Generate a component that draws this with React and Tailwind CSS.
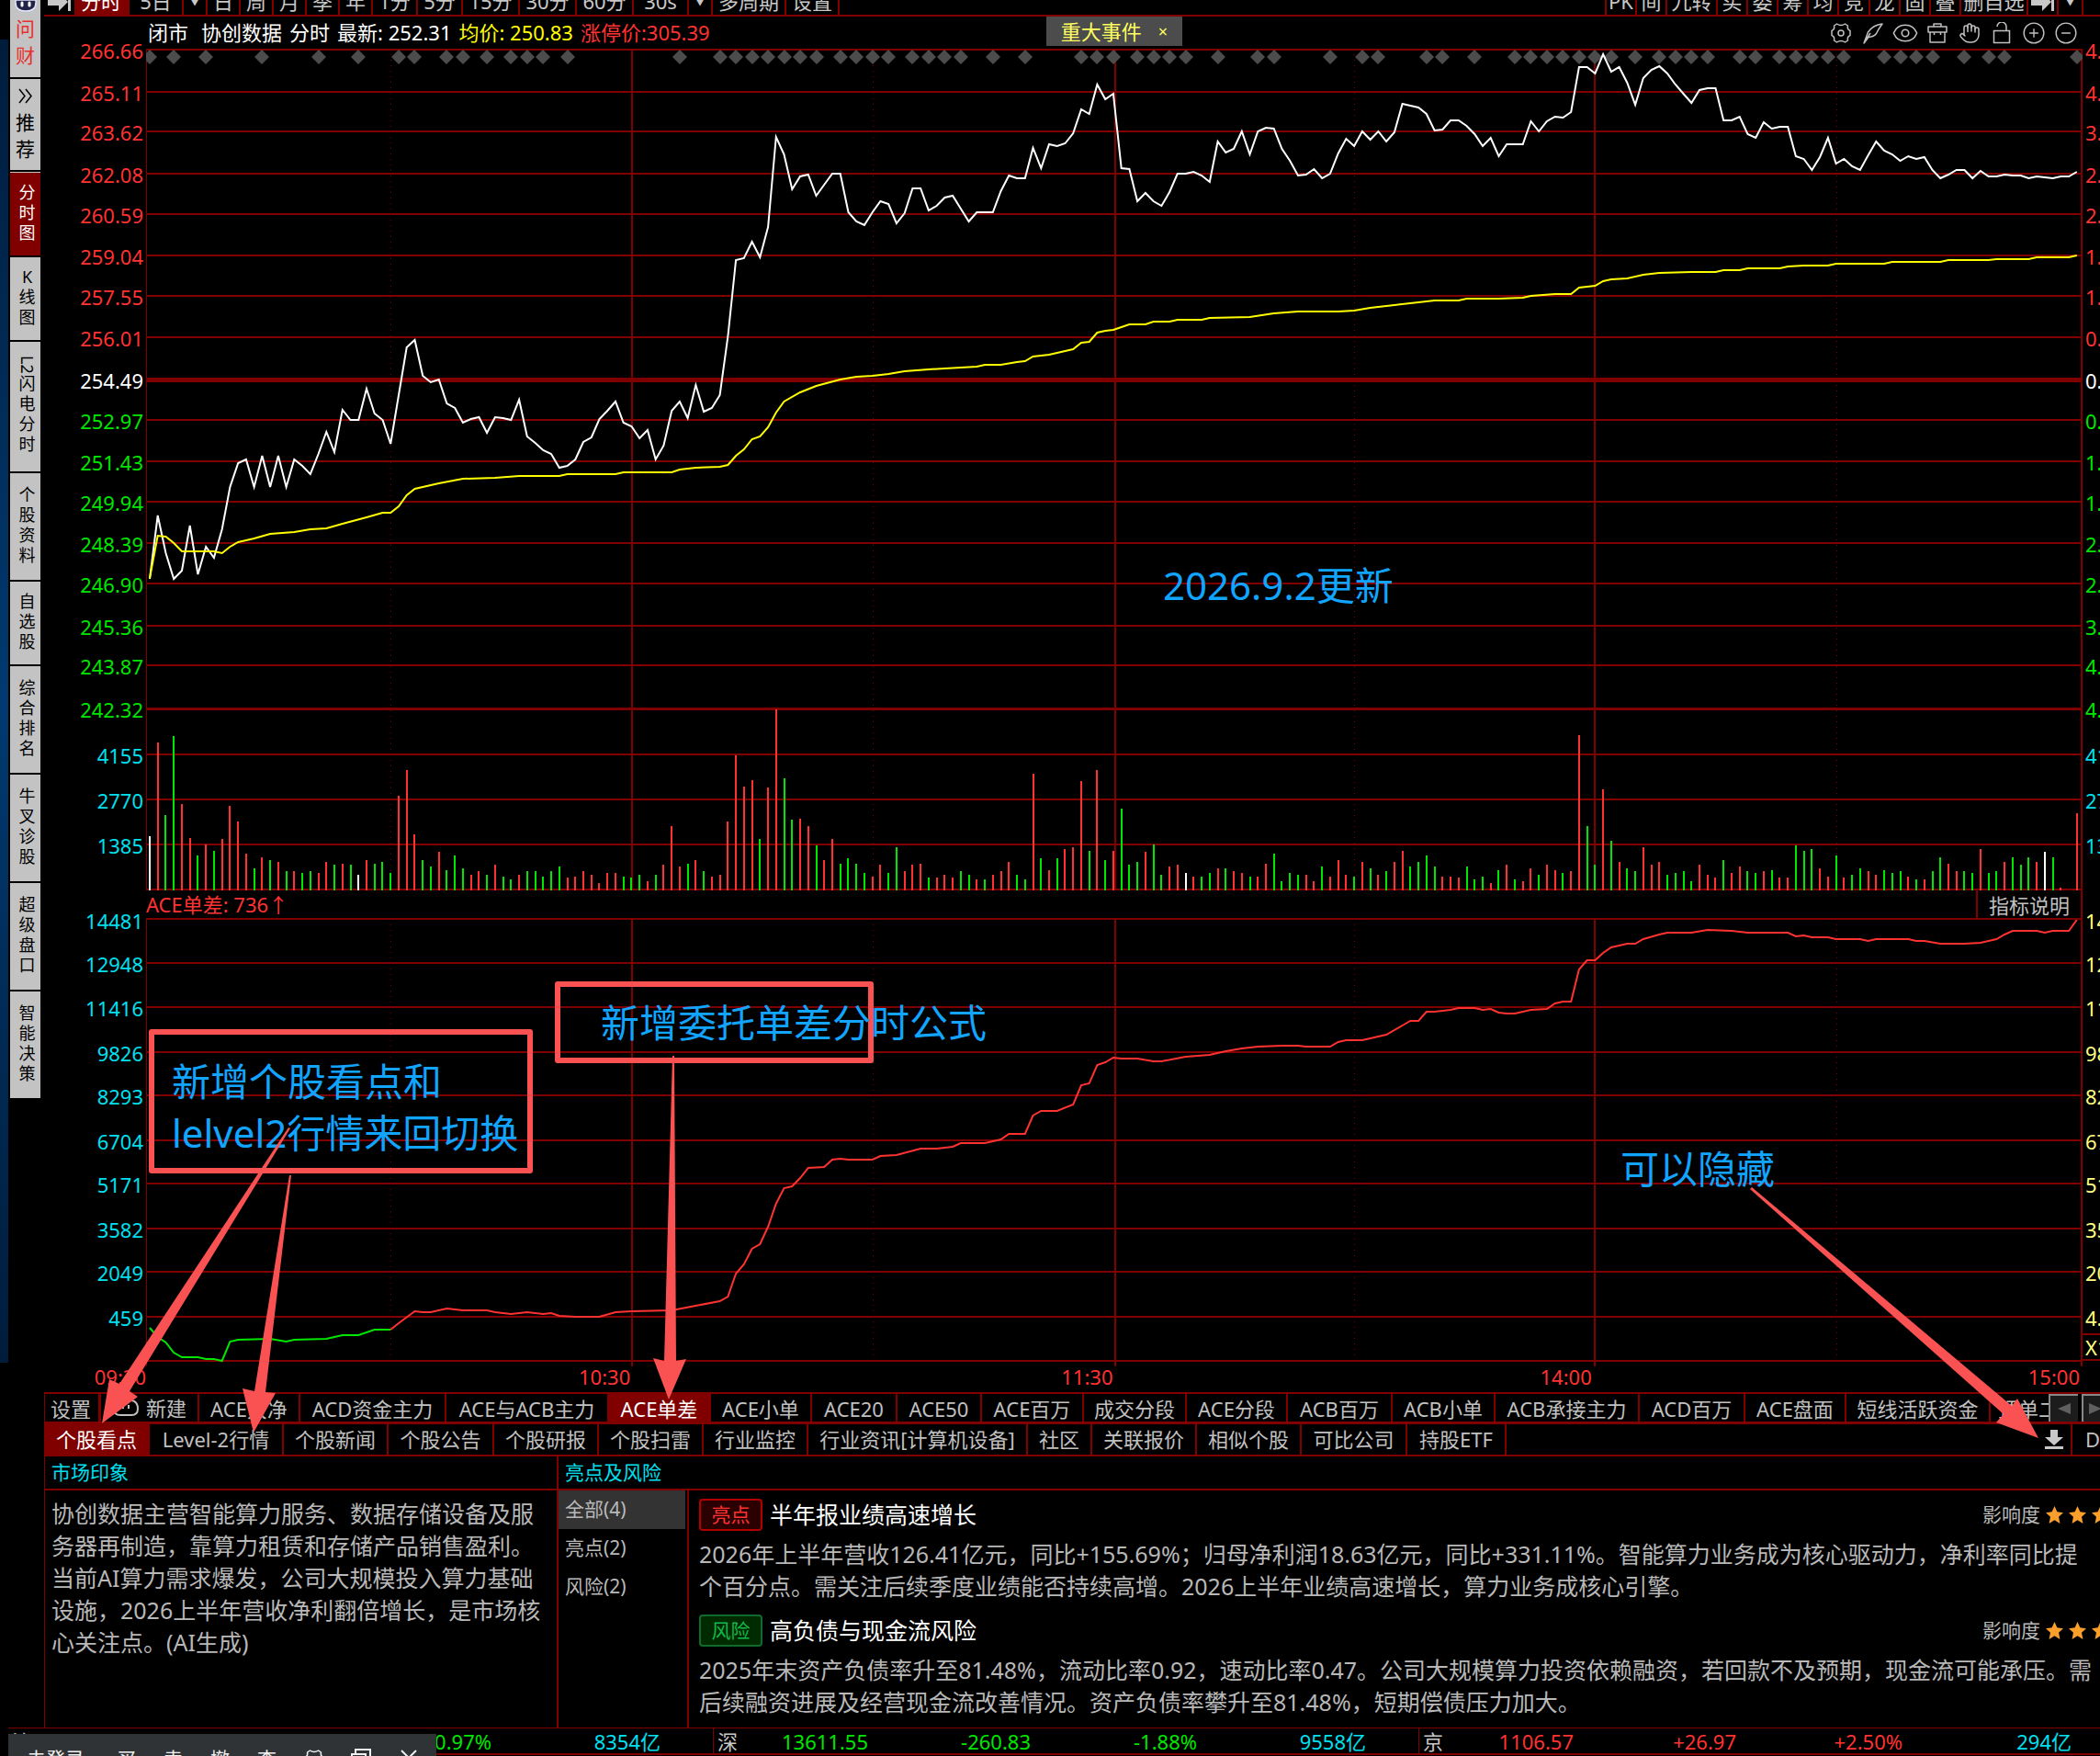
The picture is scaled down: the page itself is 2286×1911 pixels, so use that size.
import { Eye, Hand, CirclePlus, CircleMinus } from 'lucide-react'
import clsx from 'clsx'

const sideItems = [
  { label: '分时图', h: 'h-[91px]', active: true },
  { label: 'K线图', h: 'h-[90px]' },
  { label: '闪电分时', prefix: 'L2', h: 'h-[141px]' },
  { label: '个股资料', h: 'h-[116px]' },
  { label: '自选股', h: 'h-[90px]' },
  { label: '综合排名', h: 'h-[116px]' },
  { label: '牛叉诊股', h: 'h-[116px]' },
  { label: '超级盘口', h: 'h-[116px]' },
  { label: '智能决策', h: 'h-[116px]' },
]

const periods = [
  { label: '分时', w: 'w-[60px]', active: true },
  { label: '5日', w: 'w-[59px]' },
  { label: '▼', w: 'w-[26px]', arrow: true },
  { label: '日', w: 'w-9' },
  { label: '周', w: 'w-9' },
  { label: '月', w: 'w-9' },
  { label: '季', w: 'w-9' },
  { label: '年', w: 'w-9' },
  { label: '1分', w: 'w-[49px]' },
  { label: '5分', w: 'w-[49px]' },
  { label: '15分', w: 'w-[62px]' },
  { label: '30分', w: 'w-[62px]' },
  { label: '60分', w: 'w-[62px]' },
  { label: '30s', w: 'w-[60px]' },
  { label: '▼', w: 'w-[26px]', arrow: true },
  { label: '多周期', w: 'w-[80px]' },
  { label: '设置', w: 'w-[58px]' },
]

const tools = [
  { label: 'PK', w: 'w-[33px]' },
  { label: '间', w: 'w-[33px]' },
  { label: '九转', w: 'w-[55px]' },
  { label: '买', w: 'w-[33px]' },
  { label: '委', w: 'w-[33px]' },
  { label: '筹', w: 'w-[33px]' },
  { label: '均', w: 'w-[33px]' },
  { label: '竞', w: 'w-[34px]' },
  { label: '龙', w: 'w-[33px]' },
  { label: '固', w: 'w-[33px]' },
  { label: '叠', w: 'w-[33px]' },
  { label: '删自选', w: 'w-[73px]' },
]

const formulaTabs = [
  { label: 'ACE大净', w: 'w-[110px]' },
  { label: 'ACD资金主力', w: 'w-[159px]' },
  { label: 'ACE与ACB主力', w: 'w-[177px]' },
  { label: 'ACE单差', w: 'w-[111px]', active: true },
  { label: 'ACE小单', w: 'w-[110px]' },
  { label: 'ACE20', w: 'w-[93px]' },
  { label: 'ACE50', w: 'w-[92px]' },
  { label: 'ACE百万', w: 'w-[111px]' },
  { label: '成交分段', w: 'w-[112px]' },
  { label: 'ACE分段', w: 'w-[110px]' },
  { label: 'ACB百万', w: 'w-[114px]' },
  { label: 'ACB小单', w: 'w-[112px]' },
  { label: 'ACB承接主力', w: 'w-[157px]' },
  { label: 'ACD百万', w: 'w-[115px]' },
  { label: 'ACE盘面', w: 'w-[110px]' },
  { label: '短线活跃资金', w: 'w-[157px]' },
  { label: '顶单二', w: 'w-[84px]' },
]

const infoTabs = [
  { label: '个股看点', w: 'w-[114px]', active: true },
  { label: 'Level-2行情', w: 'w-[146px]' },
  { label: '个股新闻', w: 'w-[114px]' },
  { label: '个股公告', w: 'w-[115px]' },
  { label: '个股研报', w: 'w-[114px]' },
  { label: '个股扫雷', w: 'w-[114px]' },
  { label: '行业监控', w: 'w-[114px]' },
  { label: '行业资讯[计算机设备]', w: 'w-[239px]' },
  { label: '社区', w: 'w-[70px]' },
  { label: '关联报价', w: 'w-[114px]' },
  { label: '相似个股', w: 'w-[114px]' },
  { label: '可比公司', w: 'w-[115px]' },
  { label: '持股ETF', w: 'w-[108px]' },
]

const RED = 'text-[#ff3232]'
const GREEN = 'text-[#00e600]'
const CYAN = 'text-[#00e0f0]'
const YELLOW = 'text-[#ffff80]'

// y of the grid line, left label, right label, colours
const axis = [
  [54, '266.66', '4.78%', RED],
  [100, '265.11', '4.17%', RED],
  [143, '263.62', '3.59%', RED],
  [189, '262.08', '2.98%', RED],
  [233, '260.59', '2.40%', RED],
  [278, '259.04', '1.79%', RED],
  [322, '257.55', '1.20%', RED],
  [367, '256.01', '0.60%', RED],
  [413, '254.49', '0.00%', 'text-white'],
  [457, '252.97', '0.60%', GREEN],
  [502, '251.43', '1.20%', GREEN],
  [546, '249.94', '1.79%', GREEN],
  [591, '248.39', '2.40%', GREEN],
  [635, '246.90', '2.98%', GREEN],
  [681, '245.36', '3.59%', GREEN],
  [724, '243.87', '4.17%', GREEN],
  [771, '242.32', '4.78%', GREEN],
  [821, '4155', '4155', CYAN],
  [870, '2770', '2770', CYAN],
  [919, '1385', '1385', CYAN],
  [1001, '14481', '14481', CYAN, YELLOW],
  [1048, '12948', '12948', CYAN, YELLOW],
  [1096, '11416', '11416', CYAN, YELLOW],
  [1145, '9826', '9826', CYAN, YELLOW],
  [1192, '8293', '8293', CYAN, YELLOW],
  [1241, '6704', '6704', CYAN, YELLOW],
  [1288, '5171', '5171', CYAN, YELLOW],
  [1337, '3582', '3582', CYAN, YELLOW],
  [1384, '2049', '2049', CYAN, YELLOW],
  [1433, '459', '4.59', CYAN, YELLOW],
]

// one value per minute
const price = [
  630, 561, 602, 630, 621, 572, 625, 595, 607, 576, 530, 504, 500, 530, 496, 530, 496, 530, 500, 507,
  516, 494, 470, 492, 446, 457, 457, 423, 450, 457, 483, 430, 378, 370, 409, 416, 413, 439, 444, 460,
  456, 454, 471, 454, 455, 457, 435, 475, 482, 490, 494, 509, 507, 500, 481, 476, 456, 447, 437, 460,
  464, 477, 468, 500, 485, 447, 437, 455, 419, 448, 444, 430, 366, 283, 281, 263, 280, 247, 149, 168,
  206, 192, 190, 213, 201, 189, 189, 231, 241, 245, 231, 219, 222, 243, 232, 205, 205, 229, 224, 215,
  213, 227, 241, 231, 231, 231, 208, 191, 194, 194, 161, 183, 157, 159, 156, 145, 119, 124, 92, 108,
  102, 183, 184, 219, 210, 219, 224, 209, 189, 189, 187, 191, 198, 154, 166, 162, 143, 168, 143, 139,
  140, 162, 175, 191, 190, 184, 194, 189, 167, 151, 159, 143, 152, 143, 154, 144, 113, 115, 117, 124,
  142, 141, 131, 131, 137, 146, 159, 150, 170, 157, 157, 157, 132, 143, 132, 127, 128, 122, 73, 73,
  80, 59, 78, 73, 90, 114, 85, 76, 72, 80, 92, 102, 112, 98, 96, 96, 131, 131, 127, 146,
  150, 133, 140, 138, 138, 170, 173, 185, 171, 150, 178, 173, 181, 185, 169, 154, 164, 168, 175, 170,
  173, 171, 185, 194, 190, 185, 185, 194, 186, 192, 192, 190, 191, 191, 194, 192, 193, 194, 192, 192,
  187,
]

// [minute, y]
const average = [
  [0, 629], [1, 583], [2, 584], [3, 591], [4, 600], [8, 600], [9, 602], [10, 595], [11, 590], [13, 586],
  [15, 581], [18, 579], [20, 576], [22, 575], [24, 570], [27, 563], [29, 558], [30, 558], [31, 551], [32, 539],
  [33, 532], [36, 526], [39, 521], [43, 520], [46, 518], [51, 518], [52, 516], [58, 516], [59, 514], [65, 514],
  [66, 511], [68, 509], [71, 508], [72, 506], [73, 496], [74, 489], [75, 478], [76, 475], [77, 465], [78, 449],
  [79, 437], [81, 427], [83, 420], [86, 413], [88, 410], [90, 409], [92, 407], [94, 404], [97, 402], [101, 400],
  [103, 399], [104, 397], [106, 397], [108, 394], [109, 393], [110, 388], [112, 386], [115, 380], [116, 373], [117, 372],
  [118, 362], [119, 360], [120, 359], [121, 356], [122, 353], [124, 353], [125, 350], [127, 350], [128, 348], [131, 348],
  [132, 346], [137, 345], [140, 341], [143, 339], [148, 339], [150, 338], [152, 335], [155, 332], [158, 329], [160, 327],
  [163, 327], [164, 325], [168, 325], [171, 324], [172, 322], [175, 320], [177, 320], [178, 313], [180, 311], [181, 306],
  [182, 304], [184, 303], [186, 299], [188, 297], [192, 296], [195, 296], [196, 294], [198, 294], [199, 292], [203, 292],
  [204, 290], [206, 289], [209, 289], [210, 287], [216, 287], [217, 285], [223, 285], [224, 283], [229, 283], [230, 282],
  [234, 282], [235, 280], [239, 280], [240, 278],
]

const aceGreen = [
  [0, 1445], [1, 1455], [2, 1461], [3, 1472], [4, 1477], [6, 1477], [7, 1479], [8, 1479], [9, 1481], [10, 1460],
  [11, 1458], [15, 1457], [17, 1460], [18, 1458], [22, 1457], [24, 1453], [26, 1453], [28, 1447], [30, 1447],
]

const aceRed = [
  [30, 1447], [31, 1440], [33, 1427], [34, 1428], [35, 1428], [37, 1424], [39, 1426], [42, 1426], [43, 1428], [45, 1430],
  [47, 1428], [49, 1430], [50, 1429], [51, 1432], [53, 1433], [56, 1433], [58, 1428], [60, 1427], [65, 1426], [68, 1421],
  [71, 1416], [72, 1411], [73, 1386], [74, 1376], [75, 1359], [76, 1354], [77, 1335], [78, 1310], [79, 1293], [80, 1291],
  [81, 1282], [82, 1271], [84, 1270], [85, 1262], [86, 1261], [87, 1262], [90, 1262], [91, 1258], [93, 1257], [96, 1250],
  [98, 1250], [100, 1248], [101, 1244], [104, 1244], [106, 1240], [107, 1234], [109, 1234], [110, 1214], [111, 1209], [113, 1209],
  [115, 1202], [116, 1181], [117, 1179], [118, 1159], [119, 1156], [120, 1151], [121, 1152], [123, 1152], [125, 1155], [126, 1155],
  [129, 1150], [132, 1148], [134, 1144], [136, 1141], [138, 1139], [141, 1138], [143, 1138], [144, 1139], [147, 1139], [148, 1134],
  [149, 1132], [151, 1132], [153, 1128], [154, 1126], [156, 1116], [157, 1111], [158, 1111], [159, 1101], [160, 1101], [162, 1099],
  [163, 1097], [165, 1097], [166, 1099], [167, 1098], [168, 1102], [169, 1103], [170, 1103], [172, 1099], [174, 1098], [175, 1092],
  [176, 1090], [177, 1090], [178, 1055], [179, 1045], [180, 1045], [181, 1037], [182, 1031], [184, 1027], [185, 1027], [186, 1022],
  [188, 1017], [189, 1015], [192, 1015], [194, 1012], [197, 1013], [199, 1015], [204, 1015], [205, 1019], [206, 1018], [207, 1020],
  [209, 1020], [210, 1022], [213, 1022], [214, 1024], [215, 1022], [219, 1022], [220, 1024], [221, 1024], [223, 1027], [226, 1027],
  [228, 1026], [230, 1022], [231, 1017], [232, 1013], [235, 1013], [236, 1015], [237, 1013], [239, 1013], [240, 1001],
]

// bar colour and height, one per minute
const volumes = `w59 r161 g82 g168 r94 r57 g38 r50 g43 r56 r92 r75 r40 g24 r36 g33 r31 g21 r21 g19
g21 r19 r31 g28 r29 g28 w17 r33 g29 g31 g19 r103 r131 r61 g33 g26 r42 g22 g38 g24
r17 r21 g17 r28 g15 g12 r17 g21 g21 g15 g21 g26 r14 r15 r21 r17 r8 r19 r19 g15
g14 g17 r10 g17 r28 r70 r26 g29 r33 g21 r15 r17 r75 r147 r113 r120 g56 r112 r197 g122
g77 r78 r70 g49 r33 r56 g29 g35 g29 g19 r15 r28 g19 g47 r21 r28 r29 g14 r14 r17
r14 g21 g17 r12 g12 r17 r21 r31 g17 g12 r127 g35 r22 g35 r45 r47 r119 g43 r131 g33
r43 g89 g28 g31 r42 g50 g17 r26 r28 w19 r15 g15 g19 r24 g24 r21 r19 g15 r15 r29
g40 g10 g19 g17 r17 r10 g26 r15 r33 r17 g15 r31 g24 r17 g21 r31 r43 g26 g31 g38
g26 r15 r15 r14 g26 g12 g15 r8 g22 r28 g12 r10 r24 g17 r28 r22 g19 r21 r169 g70
g28 r110 g54 r31 g24 g21 r47 r28 r31 g17 g19 g21 g10 r28 r17 r14 g33 r19 r26 g21
g19 r21 g22 r14 r14 g49 g43 g45 r24 r15 g38 r14 g17 g24 r21 r17 g22 g19 g21 r15
g12 r12 g21 g36 r29 r21 g21 g19 r45 g19 g21 r31 g36 g28 g36 r31 w42 g36 r3 r0
r84`.split(/\s+/)

const barColor = { r: '#ff3232', g: '#00e600', w: '#ffffff' }

const eventMinutes = [
  0, 3, 7, 14, 21, 26, 31, 33, 37, 39, 42, 45, 47, 49, 52, 66, 71, 73, 75, 77, 79, 81, 83, 86, 88, 90, 92, 95, 97, 99,
  101, 105, 109, 116, 118, 120, 123, 125, 127, 129, 133, 138, 140, 147, 151, 153, 159, 161, 165, 170, 172, 174, 176,
  178, 180, 182, 185, 188, 190, 192, 194, 198, 200, 203, 205, 207, 209, 211, 216, 218, 220, 222, 226, 229, 231, 240,
]

const minuteX = (i) => 163 + i * 8.741
const toPoints = (pairs) => pairs.map(([i, y]) => `${minuteX(i).toFixed(1)},${y}`).join(' ')

const hours = [687.5, 1214, 1735.5]
const halfHours = [425.5, 950.5, 1474.5, 1999.5]

function Grid({ rows, top, bottom, tick = 0 }) {
  return (
    <g stroke="#800000" fill="none" shapeRendering="crispEdges">
      {halfHours.map((x) => (
        <line key={x} x1={x} x2={x} y1={top + 5} y2={bottom} strokeDasharray="1 5" />
      ))}
      {rows.map((y) => (
        <line key={y} x1="159" x2="2267" y1={y} y2={y} strokeWidth={y === 413 ? 5 : y === 771 ? 3 : 2} />
      ))}
      {hours.map((x) => (
        <line key={x} x1={x} x2={x} y1={top} y2={bottom + tick} strokeWidth="2" />
      ))}
      <line x1="159.5" x2="159.5" y1={top} y2={bottom + tick} />
      <line x1="2266" x2="2266" y1={top} y2={bottom + tick} strokeWidth="2" />
    </g>
  )
}

function PriceChart() {
  return (
    <svg className="block h-[916px] w-full" viewBox="159 53 2108 916" preserveAspectRatio="none">
      <Grid rows={[...axis.slice(0, 20).map((r) => r[0]), 968]} top={54} bottom={969} />
      {eventMinutes.map((m) => {
        const x = Math.round(minuteX(m))
        return <path key={m} d={`M${x} 54l8 8-8 8-8-8z`} fill="#4c4c4c" />
      })}
      {volumes.map((v, i) => {
        const h = Number(v.slice(1))
        return (
          <rect
            key={i}
            x={Math.round(minuteX(i)) - 1}
            y={969 - h}
            width="2"
            height={h}
            fill={barColor[v[0]]}
            shapeRendering="crispEdges"
          />
        )
      })}
      <polyline points={toPoints(price.map((y, i) => [i, y]))} fill="none" stroke="#fff" strokeWidth="2" />
      <polyline points={toPoints(average)} fill="none" stroke="#ffff00" strokeWidth="2" />
    </svg>
  )
}

function AceChart() {
  return (
    <svg className="block h-[487px] w-full" viewBox="159 1001 2108 487" preserveAspectRatio="none">
      <Grid rows={[...axis.slice(21).map((r) => r[0]), 1481]} top={1001} bottom={1481} tick={6} />
      <polyline points={toPoints(aceGreen)} fill="none" stroke="#00e600" strokeWidth="2" />
      <polyline points={toPoints(aceRed)} fill="none" stroke="#ff3232" strokeWidth="2" />
    </svg>
  )
}

function AxisLabels({ side }) {
  return (
    <ul>
      {axis.map(([y, left, right, color, rightColor], i) => {
        // labels hang 15px below their grid line
        const prev = i ? axis[i - 1][0] : 18 - 15
        return (
          <li
            key={y}
            className={clsx('flex items-end leading-7', side === 'left' ? `justify-end ${color}` : rightColor || color)}
            style={{ height: y - prev }}
          >
            {side === 'left' ? left : right}
          </li>
        )
      })}
    </ul>
  )
}

function GearIcon() {
  return (
    <svg className="size-6" viewBox="0 0 24 24" fill="none" stroke="currentColor" strokeWidth="1.5" strokeLinejoin="round">
      <path d="M7.500 2Q12 5 16.500 2L19.500 4Q18.500 8 22 9.500V14.500Q18.500 16 19.500 20L16.500 22Q12 19 7.500 22L4.500 20Q5.500 16 2 14.500V9.500Q5.500 8 4.500 4z" />
      <circle cx="12" cy="12" r="3" />
    </svg>
  )
}

function QuillIcon() {
  return (
    <svg className="size-6" viewBox="0 0 24 24" fill="none" stroke="currentColor" strokeWidth="1.5" strokeLinejoin="round">
      <path d="M2 23 6.500 11Q12 3 22 2 17.500 8 15.500 12.500 13 16 7 16.500zM2 23 9 12" />
    </svg>
  )
}

function CaseIcon() {
  return (
    <svg className="size-6" viewBox="0 0 24 24" fill="none" stroke="currentColor" strokeWidth="1.5" strokeLinejoin="round">
      <path d="M8 5V2h8v3M2 5h20v6H2zM4 11v11h16V11M8.500 11v3M15.500 11v3" />
    </svg>
  )
}

function LockIcon() {
  return (
    <svg className="size-6" viewBox="0 0 24 24" fill="none" stroke="currentColor" strokeWidth="1.5">
      <path d="M3.500 9.500h17v13h-17zM7 5a5 5 0 0 1 10 0v4.500" />
    </svg>
  )
}

function Star() {
  return (
    <svg className="size-[19px] shrink-0" viewBox="0 0 24 24" fill="#fa9f2c">
      <path d="M12 0l3.600 8 8.400 1-6.300 5.700L19.500 24 12 19.200 4.500 24l1.800-9.300L0 9l8.400-1z" />
    </svg>
  )
}

const chartTools = [
  ['设置', <GearIcon />],
  ['画线', <QuillIcon />],
  ['显示', <Eye className="-mx-[3px] size-[30px]" strokeWidth={1.3} />],
  ['工具箱', <CaseIcon />],
  ['拖动', <Hand className="size-6" strokeWidth={1.5} />],
  ['锁定', <LockIcon />],
  ['放大', <CirclePlus className="-mx-px size-[26px]" strokeWidth={1.3} />],
  ['缩小', <CircleMinus className="-mx-px size-[26px]" strokeWidth={1.3} />],
]

function Sidebar() {
  return (
    <nav className="ml-[2px] flex w-[33px] shrink-0 flex-col gap-[2px] text-center">
      <button className="flex h-[84px] flex-col items-center bg-[#c3c3c3] text-[21px] leading-[29px] text-[#e83030]">
        <svg className="h-[17px] w-6 shrink-0" viewBox="0 0 24 17">
          <path d="M1 0h22v3q0 9-11 9T1 3z" fill="#222446" stroke="#e4e4ff" strokeWidth="1.5" />
          <path d="M8 3v3M16 3v3" stroke="#fff" strokeWidth="3" strokeLinecap="round" />
        </svg>
        <span>问</span>
        <span>财</span>
      </button>
      <button className="flex h-[99px] flex-col items-center bg-[#c3c3c3] pt-1 text-[21px] leading-[29px] text-black">
        <svg className="my-[6px] size-[17px]" viewBox="0 0 17 17" fill="none" stroke="currentColor" strokeWidth="1.5">
          <path d="M2 1l6 7.500L2 16M9 1l6 7.500L9 16" />
        </svg>
        <span>推</span>
        <span>荐</span>
      </button>
      {sideItems.map((item) => (
        <button
          key={item.label}
          className={clsx(
            'flex flex-col items-center justify-center pb-1 pl-1 text-[18px] leading-[22px]',
            item.h,
            item.active ? 'border-t border-[#c3c3c3] bg-[#800000] text-white' : 'bg-[#c3c3c3] text-black',
          )}
        >
          {item.prefix && <span className="[writing-mode:vertical-rl]">{item.prefix}</span>}
          {[...item.label].map((ch) => (
            <span key={ch}>{ch}</span>
          ))}
        </button>
      ))}
    </nav>
  )
}

function JumpArrow() {
  return (
    <svg className="h-[18px] w-[26px]" viewBox="0 0 26 18" fill="#c8c8c8">
      <path d="M0 0h12v-6l10 10-10 10V8H0zM22 0h3v14h-3z" />
    </svg>
  )
}

function Toolbar() {
  return (
    <div className="flex h-[18px] shrink-0 items-end overflow-hidden border-b-2 border-[#800000] leading-[26px] text-[#c8c8c8]">
      <button aria-label="收起" className="flex w-[33px] justify-center">
        <JumpArrow />
      </button>
      {periods.map((p, i) => (
        <button
          key={i}
          className={clsx(
            'flex h-7 shrink-0 justify-center border-r-2 border-[#800000]',
            p.w,
            p.active && 'bg-[#800000] text-white',
            p.arrow && 'text-sm leading-6',
          )}
        >
          {p.label}
        </button>
      ))}
      <div className="ml-auto flex border-l-2 border-[#800000]">
        {tools.map((t) => (
          <button key={t.label} className={clsx('flex h-7 shrink-0 justify-center border-r-2 border-[#800000]', t.w)}>
            {t.label}
          </button>
        ))}
        <button aria-label="展开" className="flex w-[33px] items-end justify-center border-r-2 border-[#800000]">
          <JumpArrow />
        </button>
        <button className="flex w-[27px] justify-center border-r-2 border-[#800000] text-sm leading-6">▼</button>
      </div>
      <div className="w-[18px] shrink-0" />
    </div>
  )
}

function ChartArea() {
  return (
    <section className="shrink-0">
      <div className="flex">
        <div className="w-[111px] shrink-0 pr-[3px]">
          <AxisLabels side="left" />
        </div>
        <div className="min-w-0 flex-1">
          <header className="grid h-[35px] grid-cols-[1fr_auto_1fr] items-center">
            <div className="flex gap-2 pl-[2px] whitespace-nowrap text-white">
              <span className="mr-[6px]">闭市</span>
              <span>协创数据</span>
              <span>分时</span>
              <span>最新: 252.31</span>
              <span className="text-[#ffff00]">均价: 250.83</span>
              <span className={RED}>涨停价:305.39</span>
            </div>
            <button className="flex h-8 items-center gap-[18px] self-start bg-[#4c4c4c] px-4 text-[#ffff60]">
              重大事件 <span className="text-[18px]">×</span>
            </button>
            <div className="flex items-center justify-end gap-[11px] pr-[6px] text-[#c0c0c0]">
              {chartTools.map(([name, icon]) => (
                <button key={name} aria-label={name}>
                  {icon}
                </button>
              ))}
            </div>
          </header>
          <PriceChart />
          <div className="flex h-8 items-center justify-between border-r-2 border-b-2 border-[#800000]">
            <span className={RED}>ACE单差: 736↑</span>
            <button className="h-full border-l-2 border-[#800000] px-[12px] text-[#c0c0c0]">指标说明</button>
          </div>
          <AceChart />
        </div>
        <div className="w-[19px] shrink-0 overflow-hidden pl-[3px]">
          <AxisLabels side="right" />
          <div className="-ml-[3px] mt-[3px] h-[30px] border-y-2 border-[#800000] pl-[3px] leading-[26px] text-[#ffff80]">X10</div>
        </div>
      </div>
      <div className="flex h-[27px] leading-5 text-[#ff3232]">
        <span className="w-[111px] shrink-0 text-right">09:30</span>
        <div className="grid flex-1 grid-cols-[528fr_526fr_522fr_532fr] pr-[3px] text-right">
          <span>10:30</span>
          <span>11:30</span>
          <span>14:00</span>
          <span>15:00</span>
        </div>
        <span className="w-[19px] shrink-0" />
      </div>
    </section>
  )
}

function Tab({ tab }) {
  return (
    <button
      className={clsx(
        'shrink-0 border-r-2 border-[#800000] text-center whitespace-nowrap',
        tab.w,
        tab.active ? 'bg-[#800000] text-white' : 'text-[#c0c0c0]',
      )}
    >
      {tab.label}
    </button>
  )
}

function TabRows() {
  return (
    <div className="shrink-0 border-l border-[#800000] text-[#c0c0c0]">
      <div className="flex h-[35px] border-t-2 border-b-3 border-[#800000]">
        <div className="flex min-w-0 flex-1 overflow-hidden">
          <button className="w-[61px] shrink-0 border-r-3 border-[#800000] pr-[2px]">设置</button>
          <button className="flex w-[107px] shrink-0 items-center justify-end gap-2 border-r-2 border-[#800000] pr-3">
            <svg className="h-5 w-7" viewBox="0 0 28 20" fill="none" stroke="currentColor" strokeWidth="2">
              <path d="M8 2h12q7 1 7 9 0 7-7 7H8q-7 0-7-7 0-8 7-9zM11 7v4M17 7v4" />
            </svg>
            新建
          </button>
          {formulaTabs.map((t) => (
            <Tab key={t.label} tab={t} />
          ))}
        </div>
        <div className="flex shrink-0 gap-1 bg-black">
          <button aria-label="向左" className="flex w-8 items-center justify-center border-t-2 border-l-2 border-[#888] bg-[#1c1c1c]">
            <svg className="h-3 w-[14px]" viewBox="0 0 14 12" fill="#606060">
              <path d="M14 0v12L0 6z" />
            </svg>
          </button>
          <button aria-label="向右" className="flex w-5 items-center border-t-2 border-l-2 border-[#888] bg-[#1c1c1c] pl-[6px]">
            <svg className="h-3 w-[14px] shrink-0" viewBox="0 0 14 12" fill="#606060">
              <path d="M0 0v12l14-6z" />
            </svg>
          </button>
        </div>
      </div>
      <div className="flex h-[35px] border-b-2 border-[#800000]">
        {infoTabs.map((t) => (
          <Tab key={t.label} tab={t} />
        ))}
        <button aria-label="隐藏" className="mr-2 ml-auto">
          <svg className="h-[22px] w-5" viewBox="0 0 20 22" fill="#c8c8c8">
            <path d="M6 0h8v8h6L10 17 0 8h6zM0 18h20v3H0z" />
          </svg>
        </button>
        <button className="w-8 overflow-hidden border-l-2 border-[#800000] pl-[14px] text-left">DDE</button>
      </div>
    </div>
  )
}

const insights = [
  {
    tag: '亮点',
    tagClass: 'border-[#b00000] bg-[#2a0000] text-[#ff3232]',
    title: '半年报业绩高速增长',
    lines: [
      '2026年上半年营收126.41亿元，同比+155.69%；归母净利润18.63亿元，同比+331.11%。智能算力业务成为核心驱动力，净利率同比提',
      '个百分点。需关注后续季度业绩能否持续高增。2026上半年业绩高速增长，算力业务成核心引擎。',
    ],
  },
  {
    tag: '风险',
    tagClass: 'border-[#0f6b2c] bg-[#002a00] text-[#12b84a]',
    title: '高负债与现金流风险',
    lines: [
      '2025年末资产负债率升至81.48%，流动比率0.92，速动比率0.47。公司大规模算力投资依赖融资，若回款不及预期，现金流可能承压。需',
      '后续融资进展及经营现金流改善情况。资产负债率攀升至81.48%，短期偿债压力加大。',
    ],
  },
]

function InfoPanel() {
  return (
    <div className="flex min-h-0 flex-1 border-l border-[#800000] text-[#b8b8b8]">
      <section className="w-[559px] shrink-0 border-r-2 border-[#800000]">
        <h2 className="h-[37px] border-b-2 border-[#800000] pl-[7px] text-[21px] leading-[35px] text-[#00e0f0]">市场印象</h2>
        <p className="px-[7px] pt-2 text-[25px] leading-[35px]">
          协创数据主营智能算力服务、数据存储设备及服务器再制造，靠算力租赁和存储产品销售盈利。当前AI算力需求爆发，公司大规模投入算力基础设施，2026上半年营收净利翻倍增长，是市场核心关注点。(AI生成)
        </p>
      </section>
      <section className="flex min-w-0 flex-1 flex-col">
        <h2 className="h-[37px] shrink-0 border-b-2 border-[#800000] pl-[7px] text-[21px] leading-[35px] text-[#00e0f0]">亮点及风险</h2>
        <div className="flex min-h-0 flex-1">
          <div className="flex w-[142px] shrink-0 flex-col border-r-2 border-[#800000] pr-[2px] text-[21px]">
            <button className="h-[42px] bg-[#333] pl-[7px] text-left">全部(4)</button>
            <button className="h-[42px] pl-[7px] text-left">亮点(2)</button>
            <button className="h-[42px] pl-[7px] text-left">风险(2)</button>
          </div>
          <div className="min-w-0 flex-1 overflow-hidden pt-[9px] pl-[11px]">
            {insights.map((item) => (
              <article key={item.tag} className="h-[126px]">
                <div className="flex items-center">
                  <span className={clsx('h-[35px] w-[69px] rounded-sm border-2 text-center text-[21px] leading-[31px]', item.tagClass)}>
                    {item.tag}
                  </span>
                  <h3 className="ml-2 text-[25px] leading-[35px] text-white">{item.title}</h3>
                  <div className="ml-auto flex w-[128px] items-center gap-[6px] overflow-hidden text-[21px]">
                    <span className="shrink-0">影响度</span>
                    <Star />
                    <Star />
                    <Star />
                  </div>
                </div>
                <p className="mt-2 text-[25px] leading-[35px]">
                  {item.lines.map((line) => (
                    <span key={line} className="block whitespace-nowrap">
                      {line}
                    </span>
                  ))}
                </p>
              </article>
            ))}
          </div>
        </div>
      </section>
    </div>
  )
}

const indexes = [
  { name: '沪', cells: ['', '', '-0.97%', '8354亿'], color: GREEN },
  { name: '深', cells: ['13611.55', '-260.83', '-1.88%', '9558亿'], color: GREEN },
  { name: '京', cells: ['1106.57', '+26.97', '+2.50%', '294亿'], color: RED },
]

function StatusBar() {
  return (
    <footer className="ml-[9px] flex h-[30px] shrink-0 overflow-hidden border-t border-b-2 border-[#800000] leading-[28px]">
      {indexes.map((idx) => (
        <div
          key={idx.name}
          className="grid w-[768px] shrink-0 grid-cols-[26px_142px_177px_181px_184px] border-r border-[#800000] text-right"
        >
          <span className="text-[#c8c8c8]">{idx.name}</span>
          {idx.cells.map((cell, i) => (
            <span key={i} className={i === 3 ? CYAN : idx.color}>
              {cell}
            </span>
          ))}
        </div>
      ))}
    </footer>
  )
}

function LoginBar() {
  return (
    <div className="absolute bottom-0 left-[9px] flex h-6 w-[466px] overflow-hidden bg-[#2f3336] pt-[11px] text-[21px] leading-[30px] text-[#f0f0f0]">
      <button className="h-8 w-[103px] shrink-0">未登录</button>
      {['买', '卖', '撤', '查'].map((t) => (
        <button key={t} className="h-8 w-[51px] shrink-0">
          {t}
        </button>
      ))}
      <button aria-label="设置" className="flex h-8 w-[51px] shrink-0 justify-center pt-[5px]">
        <GearIcon />
      </button>
      <button aria-label="窗口" className="flex h-8 w-[52px] shrink-0 justify-center pt-[5px]">
        <svg className="size-6" viewBox="0 0 24 24" fill="none" stroke="currentColor" strokeWidth="2">
          <path d="M6 5V1h16v14h-4M2 6h15v14H2z" />
        </svg>
      </button>
      <button aria-label="关闭" className="flex h-8 w-[52px] shrink-0 justify-center pt-[5px]">
        <svg className="size-5" viewBox="0 0 20 20" stroke="currentColor" strokeWidth="2">
          <path d="M2 2l16 16M18 2L2 18" />
        </svg>
      </button>
    </div>
  )
}

function Notes() {
  return (
    <div className="pointer-events-none absolute inset-0 text-[42px] leading-[56px] whitespace-nowrap text-[#12a5ff]">
      <svg className="absolute inset-0 size-full" viewBox="0 0 2286 1911" preserveAspectRatio="none" fill="none" stroke="#fa5252" strokeWidth="6" strokeLinejoin="round">
        <rect x="165" y="1123" width="412" height="151" />
        <rect x="607" y="1071" width="341" height="83" />
      </svg>
      <p className="absolute top-[1149px] left-[187px]">
        新增个股看点和
        <br />
        lelvel2行情来回切换
      </p>
      <p className="absolute top-[1085px] left-[654px]">新增委托单差分时公式</p>
      <p className="absolute top-[1244px] left-[1764px]">可以隐藏</p>
      <p className="absolute top-[609px] left-[1266px]">2026.9.2更新</p>
      <svg className="absolute inset-0 size-full" viewBox="0 0 2286 1911" preserveAspectRatio="none" fill="#fa5252">
        <path d="M314 1227L130 1506 119 1501 111 1549 150 1520 141 1514 316 1228z" />
        <path d="M315 1279L277 1514 264 1511 276 1559 300 1516 289 1515 317 1279z" />
        <path d="M732 1149L723 1481 711 1478 728 1523 747 1479 736 1481 734 1149z" />
        <path d="M1905 1294L2181 1539 2173 1548 2219 1565 2196 1522 2190 1530 1907 1292z" />
      </svg>
    </div>
  )
}

export default function App() {
  return (
    <div className="relative flex h-screen flex-col overflow-hidden bg-black pb-px font-['Noto_Sans','Noto_Sans_CJK_SC',sans-serif] text-[22px]">
      <div className="flex min-h-0 flex-1">
        <div className="mt-[43px] h-[1440px] w-[9px] shrink-0 bg-linear-to-b from-[#001c3c] via-[#003a70] to-[#001c3c]" />
        <Sidebar />
        <main className="ml-1 flex min-w-0 flex-1 flex-col">
          <Toolbar />
          <ChartArea />
          <TabRows />
          <InfoPanel />
        </main>
      </div>
      <StatusBar />
      <LoginBar />
      <Notes />
    </div>
  )
}
